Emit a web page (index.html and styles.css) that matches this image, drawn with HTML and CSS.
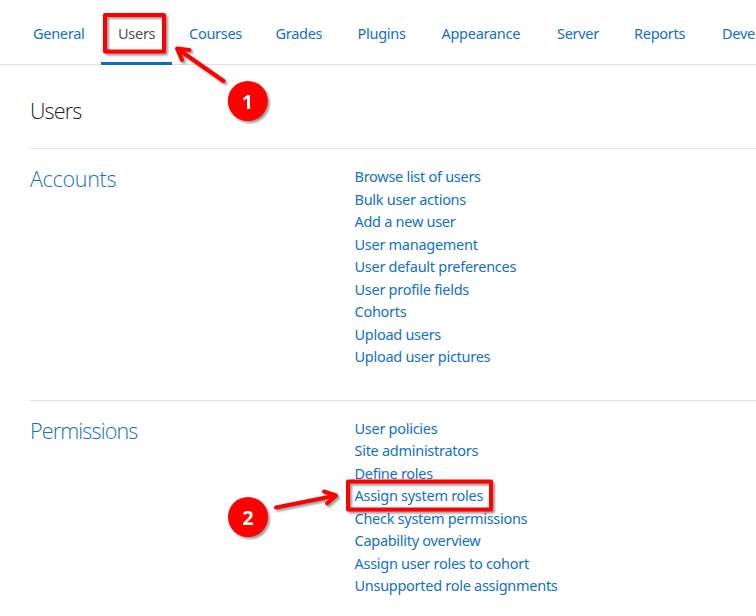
FILE: index.html
```html
<!DOCTYPE html>
<html lang="en">
<head>
<meta charset="utf-8">
<title>Users</title>
<link rel="stylesheet" href="styles.css">
</head>
<body>
<nav class="tabs">
<a href="#">General</a><a href="#" class="active">Users</a><a href="#">Courses</a><a href="#">Grades</a><a href="#">Plugins</a><a href="#">Appearance</a><a href="#">Server</a><a href="#">Reports</a><a href="#">Deve</a>
</nav>
<main>
<h2 class="title">Users</h2>
<section>
<h3 class="accounts"><a href="#">Accounts</a></h3>
<ul>
<li><a href="#">Browse list of users</a></li>
<li><a href="#">Bulk user actions</a></li>
<li><a href="#">Add a new user</a></li>
<li><a href="#">User management</a></li>
<li><a href="#">User default preferences</a></li>
<li><a href="#">User profile fields</a></li>
<li><a href="#">Cohorts</a></li>
<li><a href="#">Upload users</a></li>
<li><a href="#">Upload user pictures</a></li>
</ul>
</section>
<section>
<h3><a href="#">Permissions</a></h3>
<ul>
<li><a href="#">User policies</a></li>
<li><a href="#">Site administrators</a></li>
<li><a href="#">Define roles</a></li>
<li><a href="#">Assign system roles</a></li>
<li><a href="#">Check system permissions</a></li>
<li><a href="#">Capability overview</a></li>
<li><a href="#">Assign user roles to cohort</a></li>
<li><a href="#">Unsupported role assignments</a></li>
</ul>
</section>
</main>
<svg class="marks" width="756" height="616" viewBox="0 0 756 616">
<g fill="none" stroke="#f00" stroke-width="4" stroke-linejoin="round" stroke-linecap="round">
<rect x="105" y="15" width="59" height="36.500"/>
<rect x="348" y="481.500" width="143" height="28"/>
<path d="M223.500 81L177 48.500M189.500 50L177 48.500L182 60"/>
<path d="M276 507.500L336 495.500M324 491.500L336 495.500L327 503.500"/>
</g>
<g fill="#f00"><circle cx="247.800" cy="101" r="20"/><circle cx="248" cy="517" r="20"/></g>
<g class="num"><text x="247.500" y="108.500">1</text><text x="248" y="524.500">2</text></g>
</svg>
</body>
</html>
```
FILE: styles.css
```css
body {
  margin: 0;
  width: 756px;
  height: 616px;
  overflow: hidden;
  position: relative;
  background: #fff;
  font: 14.5px/22.5px "Noto Sans", sans-serif;
  letter-spacing: -0.28px;
}

a {
  color: #1270ca;
  text-decoration: none;
}

.tabs {
  display: grid;
  grid-template-columns: 85px 71px 86.5px 82px 84px 115.5px 77px 88px 1fr;
  box-sizing: border-box;
  height: 65px;
  padding-left: 16px;
  border-bottom: 1px solid #dee2e6;
}

.tabs a {
  box-sizing: border-box;
  height: 65px;
  padding: 22px 0 0 17px;
  border-bottom: 3px solid transparent;
}

.tabs .active {
  color: #495057;
  border-bottom-color: #0f6cbf;
}

main {
  padding-left: 30px;
}

.title,
h3 {
  margin: 0;
  font-family: "Open Sans", "Noto Sans", sans-serif;
  font-size: 21.5px;
  line-height: 30px;
  font-weight: 300;
  letter-spacing: -0.85px;
}

.title {
  height: 83px;
  padding-top: 31px;
  box-sizing: border-box;
  color: #1d2125;
}

section {
  display: grid;
  grid-template-columns: 324.5px 1fr;
  height: 252px;
  box-sizing: border-box;
  border-top: 1px solid #dee2e6;
  padding-top: 16px;
}

section:last-child {
  height: 215px;
  padding-top: 15.8px;
}

h3 {
  margin-top: -0.6px;
}

.accounts {
  letter-spacing: -0.3px;
}

ul {
  margin: 0;
  padding: 0;
  list-style: none;
}

.marks {
  position: absolute;
  left: 0;
  top: 0;
  filter: drop-shadow(2px 2px 1px rgba(0, 0, 0, .4));
}

.num {
  fill: #fff;
  font: bold 20px "Open Sans", sans-serif;
  text-anchor: middle;
  letter-spacing: 0;
}
```
